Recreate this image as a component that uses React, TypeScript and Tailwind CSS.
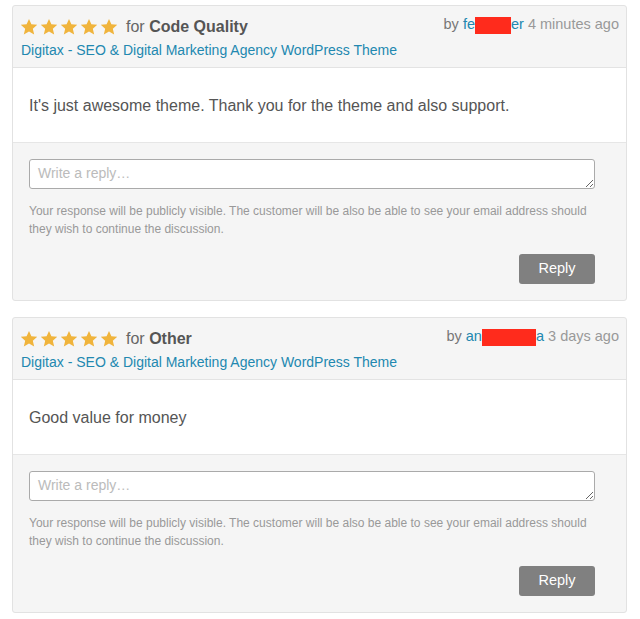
import React from "react";

const Star = () => (
  <svg width="18" height="18" viewBox="0 0 24 24" className="block">
    <path
      d="M12 1.2l3.2 7.2 7.8.7-5.9 5.2 1.8 7.7L12 18l-6.9 4 1.8-7.7L1 9.1l7.8-.7z"
      fill="#f0b43c"
    />
  </svg>
);

type R = {
  cat: string;
  pre: string;
  redW: number;
  post: string;
  time: string;
  text: string;
};

const Card = ({ r }: { r: R }) => (
  <div className="border border-[#e2e2e2] rounded-[3px] bg-[#f5f5f5] overflow-hidden">
    <div className="flex justify-between pl-[7px] pr-[7px] pt-[9px] pb-[7px] border-b border-[#e3e3e3]">
      <div>
        <div className="flex items-center h-[24px]">
          <div className="flex gap-[2px]">
            <Star />
            <Star />
            <Star />
            <Star />
            <Star />
          </div>
          <span className="ml-[8px] text-[16px] text-[#666]">
            for <b className="text-[#555]">{r.cat}</b>
          </span>
        </div>
        <div className="text-[14px] leading-[20px] mt-[1px] text-[#2288b0] ml-[1px]">
          Digitax - SEO &amp; Digital Marketing Agency WordPress Theme
        </div>
      </div>
      <div className="text-[14.5px] h-[24px] flex items-center text-[#777] -mt-[2px]">
        by&nbsp;
        <span className="text-[#2288b0] flex items-center">
          {r.pre}
          <span
            className="inline-block bg-[#ff2b1c] h-[17px]"
            style={{ width: r.redW }}
          />
          {r.post}
        </span>
        <span className="text-[#999]">&nbsp;{r.time}</span>
      </div>
    </div>
    <div className="bg-white px-[16px] pt-[27px] pb-[26px] text-[16px] leading-[21px] text-[#555] border-b border-[#e6e6e6]">
      {r.text}
    </div>
    <div className="pl-[16px] pr-[31px] pt-[16px] pb-[16px]">
      <textarea
        placeholder="Write a reply…"
        className="block w-full h-[30px] border border-[#aaa] rounded-[3px] bg-white px-[8px] py-[3px] text-[14px] leading-[20px] text-[#555] placeholder:text-[#bbb] resize-y"
      />
      <p className="mt-[13px] text-[12px] leading-[18px] text-[#999]">
        Your response will be publicly visible. The customer will be also be able to see your email address should
        they wish to continue the discussion.
      </p>
      <div className="flex justify-end mt-[16px]">
        <button className="w-[76px] h-[30px] rounded-[3px] bg-[#808080] text-white text-[14.5px]">
          Reply
        </button>
      </div>
    </div>
  </div>
);

export default function App() {
  const data: R[] = [
    {
      cat: "Code Quality",
      pre: "fe",
      redW: 36,
      post: "er",
      time: "4 minutes ago",
      text: "It's just awesome theme. Thank you for the theme and also support.",
    },
    {
      cat: "Other",
      pre: "an",
      redW: 54,
      post: "a",
      time: "3 days ago",
      text: "Good value for money",
    },
  ];
  return (
    <div
      className="w-[640px] h-[619px] bg-white pl-[12px] pr-[13px] pt-[5px] flex flex-col gap-[16px]"
      style={{ fontFamily: '"Liberation Sans", Arial, sans-serif' }}
    >
      {data.map((r, i) => (
        <Card key={i} r={r} />
      ))}
    </div>
  );
}
